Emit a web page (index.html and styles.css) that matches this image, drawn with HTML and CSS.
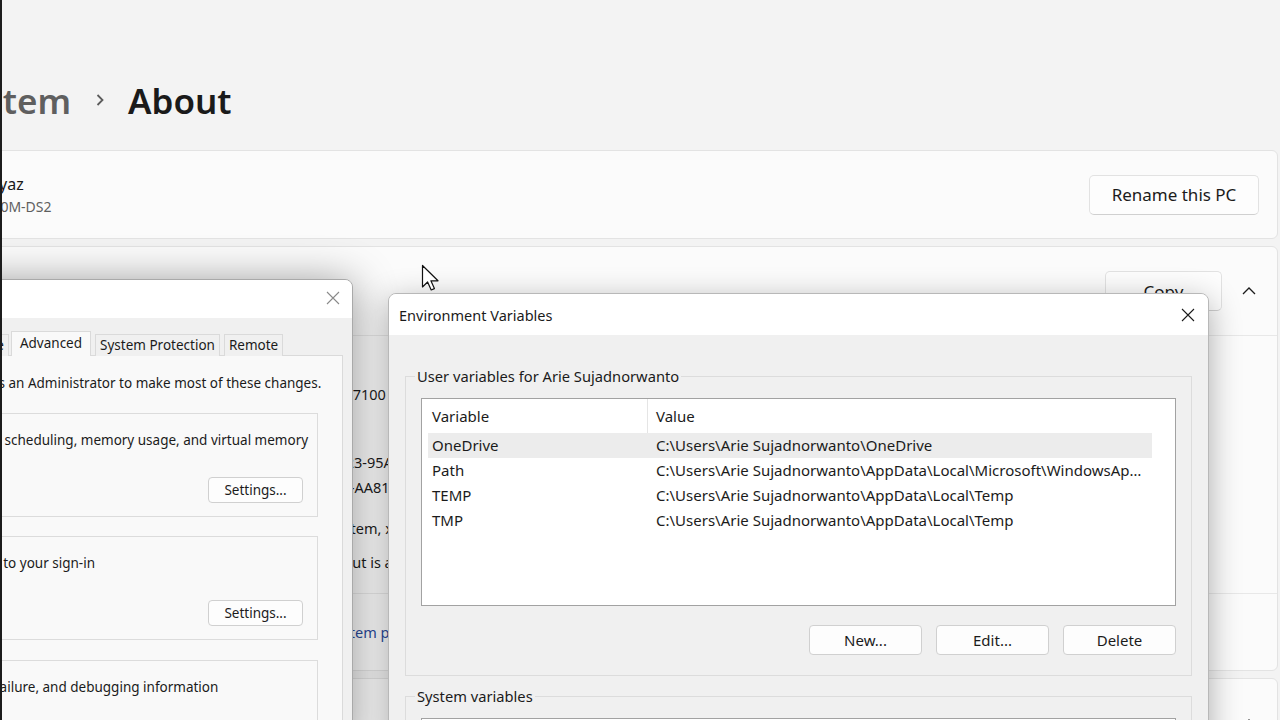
FILE: index.html
```html
<!DOCTYPE html>
<html lang="en">
<head>
<meta charset="utf-8">
<title>About - Environment Variables</title>
<link rel="stylesheet" href="styles.css">
</head>
<body>
<div class="screen">
  <main class="settings">
    <header class="crumbs">
      <span class="crumb-parent">System</span>
      <span class="crumb-sep"><svg width="10" height="14" viewBox="0 0 10 14"><path d="M2.5 2 L7.5 7 L2.5 12" fill="none" stroke="#5c5c5c" stroke-width="1.8"/></svg></span>
      <h1 class="crumb-current">About</h1>
    </header>

    <div class="cards">
      <section class="card pc-card">
        <div class="pc-info">
          <div class="pc-name">Riyaz</div>
          <div class="pc-model">H110M-DS2</div>
        </div>
        <button class="btn-fluent rename">Rename this PC</button>
      </section>

      <section class="card expander">
        <div class="exp-head">
          <span class="exp-title">Device specifications</span>
          <button class="btn-fluent copy">Copy</button>
          <svg class="chev-up" width="16" height="10" viewBox="0 0 16 10"><path d="M2 8 L8 2 L14 8" fill="none" stroke="#1b1b1b" stroke-width="1.3"/></svg>
        </div>
        <div class="specs">
          <div class="spec-row"><span class="spec-label">Device name</span><span class="spec-value">Riyaz</span></div>
          <div class="spec-row shift"><span class="spec-label">Processor</span><span class="spec-value">Intel(R) Core(TM) i3-7100 CPU @ 3.90GHz   3.91 GHz</span></div>
          <div class="spec-row"><span class="spec-label">Installed RAM</span><span class="spec-value">8.00 GB</span></div>
          <div class="spec-row"><span class="spec-label">Device ID</span><span class="spec-value">5D2B9C41-7E0A-4F23-95A2-6C8D1E7F0B44</span></div>
          <div class="spec-row join"><span class="spec-label">Product ID</span><span class="spec-value">00330-80000-00000-AA812</span></div>
          <div class="spec-row wide"><span class="spec-label">System type</span><span class="spec-value">64-bit operating system, x64-based processor</span></div>
          <div class="spec-row"><span class="spec-label">Pen and touch</span><span class="spec-value">No pen or touch input is available for this display</span></div>
        </div>
        <div class="links">
          <span class="links-label">Related links</span>
          <a class="link">Domain or workgroup</a>
          <a class="link">System protection</a>
          <a class="link">Advanced system settings</a>
        </div>
      </section>

      <section class="card expander">
        <div class="exp-head">
          <span class="exp-title">Windows specifications</span>
          <svg class="chev-up" width="16" height="10" viewBox="0 0 16 10"><path d="M2 8 L8 2 L14 8" fill="none" stroke="#1b1b1b" stroke-width="1.3"/></svg>
        </div>
      </section>
    </div>
  </main>

  <div class="window sysprops">
    <div class="titlebar inactive">
      <span class="win-title">System Properties</span>
      <svg class="close" width="14" height="14" viewBox="0 0 14 14"><path d="M1 1 L13 13 M13 1 L1 13" stroke="#8a8a8a" stroke-width="1.1"/></svg>
    </div>
    <div class="sp-body">
      <div class="tabs">
        <span class="tab">Computer Name</span>
        <span class="tab">Hardware</span>
        <span class="tab active">Advanced</span>
        <span class="tab">System Protection</span>
        <span class="tab">Remote</span>
      </div>
      <div class="tab-panel">
        <p class="sp-note">You must be logged on as an Administrator to make most of these changes.</p>
        <fieldset class="sp-group g1">
          <legend>Performance</legend>
          <p class="sp-text">Visual effects, processor scheduling, memory usage, and virtual memory</p>
          <div class="sp-actions"><button class="btn-classic">Settings...</button></div>
        </fieldset>
        <fieldset class="sp-group g2">
          <legend>User Profiles</legend>
          <p class="sp-text">Desktop settings related to your sign-in</p>
          <div class="sp-actions"><button class="btn-classic">Settings...</button></div>
        </fieldset>
        <fieldset class="sp-group g3">
          <legend>Startup and Recovery</legend>
          <p class="sp-text">System startup, system failure, and debugging information</p>
          <div class="sp-actions"><button class="btn-classic">Settings...</button></div>
        </fieldset>
      </div>
    </div>
  </div>

  <div class="window envvars">
    <div class="titlebar">
      <span class="win-title">Environment Variables</span>
      <svg class="close" width="14" height="14" viewBox="0 0 14 14"><path d="M1 1 L13 13 M13 1 L1 13" stroke="#1b1b1b" stroke-width="1.1"/></svg>
    </div>
    <div class="ev-body">
      <fieldset class="ev-group">
        <legend>User variables for Arie Sujadnorwanto</legend>
        <div class="listview">
          <div class="lv-head">
            <span class="lv-col var">Variable</span>
            <span class="lv-col val">Value</span>
          </div>
          <div class="lv-row selected"><span class="lv-cell var">OneDrive</span><span class="lv-cell val">C:\Users\Arie Sujadnorwanto\OneDrive</span></div>
          <div class="lv-row"><span class="lv-cell var">Path</span><span class="lv-cell val">C:\Users\Arie Sujadnorwanto\AppData\Local\Microsoft\WindowsApps;</span></div>
          <div class="lv-row"><span class="lv-cell var">TEMP</span><span class="lv-cell val">C:\Users\Arie Sujadnorwanto\AppData\Local\Temp</span></div>
          <div class="lv-row"><span class="lv-cell var">TMP</span><span class="lv-cell val">C:\Users\Arie Sujadnorwanto\AppData\Local\Temp</span></div>
        </div>
        <div class="ev-actions">
          <button class="btn-classic ev-btn">New...</button>
          <button class="btn-classic ev-btn">Edit...</button>
          <button class="btn-classic ev-btn">Delete</button>
        </div>
      </fieldset>
      <fieldset class="ev-group second">
        <legend>System variables</legend>
        <div class="listview tall"></div>
      </fieldset>
    </div>
  </div>

  <svg class="cursor" width="20" height="28" viewBox="0 0 20 28"><path d="M1.5 1.5 L1.5 23 L6.6 18 L10.2 26 L13.4 24.6 L9.9 16.8 L17 16.8 Z" fill="#ffffff" stroke="#111111" stroke-width="1.2" stroke-linejoin="round"/></svg>
</div>
</body>
</html>
```

FILE: styles.css
```css
* { box-sizing: border-box; }
html, body { margin: 0; padding: 0; }
body {
  width: 1280px;
  height: 720px;
  overflow: hidden;
  background: #f3f3f3;
  font-family: "Segoe UI", "Noto Sans", "Open Sans", sans-serif;
  color: #1b1b1b;
}
button { font-family: inherit; color: inherit; }
p { margin: 0; }

.screen {
  position: relative;
  width: 1280px;
  height: 720px;
  overflow: hidden;
}
.screen::after {
  content: "";
  position: absolute;
  left: 0;
  top: 0;
  width: 2px;
  height: 100%;
  background: #1c1c1c;
}

/* ---------- settings page ---------- */
.settings { display: flex; flex-direction: column; }

.crumbs {
  height: 150px;
  padding-top: 50px;
  display: flex;
  align-items: center;
  white-space: nowrap;
}
.crumb-parent {
  width: 150px;
  margin-left: -79px;
  text-align: right;
  font-size: 35px;
  font-weight: 600;
  color: #5f5f5f;
  direction: rtl;
}
.crumb-sep {
  width: 57px;
  display: flex;
  justify-content: center;
}
.crumb-current {
  margin: 0;
  font-size: 35px;
  font-weight: 600;
  color: #1a1a1a;
}

.cards {
  margin-left: -40px;
  width: 1318px;
  display: flex;
  flex-direction: column;
  gap: 7px;
}
.card {
  background: #fbfbfb;
  border: 1px solid #e3e3e3;
  border-radius: 6px;
}
.pc-card {
  height: 89px;
  display: flex;
  align-items: center;
  justify-content: space-between;
  padding-right: 18px;
}
.pc-info { display: flex; flex-direction: column; gap: 2px; }
.pc-name { margin-left: 24px; font-size: 16px; line-height: 22px; color: #1a1a1a; }
.pc-model { margin-left: 13px; font-size: 14px; line-height: 20px; color: #5f5f5f; }

.btn-fluent {
  background: #fdfdfd;
  border: 1px solid #e2e2e2;
  border-bottom-color: #d0d0d0;
  border-radius: 5px;
  font-size: 17px;
  color: #1b1b1b;
}
.rename { width: 170px; height: 40px; }

.exp-head {
  height: 88px;
  display: flex;
  align-items: center;
  padding: 0 20px 0 60px;
}
.exp-title { flex: 1; font-size: 15px; }
.copy { width: 117px; height: 40px; margin-right: 19px; }

.specs {
  border-top: 1px solid #e8e8e8;
  padding: 12px 0 18px 60px;
  font-size: 14.5px;
}
.spec-row {
  display: grid;
  grid-template-columns: 195px 1fr;
  line-height: 25px;
  margin-top: 9px;
  white-space: pre;
}
.spec-row:first-child { margin-top: 0; }
.spec-row.join { margin-top: 0; }
.spec-row.wide { margin-top: 16px; }
.spec-row.shift { grid-template-columns: 197px 1fr; }
.spec-label { color: #1b1b1b; }
.spec-value { color: #1b1b1b; }

.links {
  border-top: 1px solid #e8e8e8;
  height: 77px;
  display: flex;
  align-items: center;
  gap: 44px;
  padding-left: 41px;
  font-size: 14.5px;
  white-space: nowrap;
}
.link { color: #2a4b9b; }

.chev-up { flex: none; }

/* ---------- windows ---------- */
.window {
  position: absolute;
  display: flex;
  flex-direction: column;
  background: #f0f0f0;
  border: 1px solid #a9a9a9;
  border-radius: 0 8px 0 0;
  overflow: hidden;
  box-shadow: 0 4px 44px rgba(0, 0, 0, 0.42);
}
.titlebar {
  flex: none;
  display: flex;
  align-items: center;
  justify-content: space-between;
  background: #ffffff;
}
.win-title { font-size: 14px; color: #1b1b1b; white-space: nowrap; }

/* System properties */
.sysprops {
  left: -181px;
  top: 279px;
  width: 534px;
  height: 470px;
}
.sysprops .titlebar { height: 38px; padding: 0 12px 2px 12px; }
.sysprops .win-title { color: #777; }
.sp-body {
  flex: 1;
  padding: 13px 9px 0 10px;
  font-size: 13.5px;
}
.tabs {
  height: 25px;
  display: flex;
  align-items: flex-end;
  margin-left: -13px;
  white-space: nowrap;
}
.tab {
  height: 22px;
  line-height: 20px;
  padding: 0 4px;
  border: 1px solid #dadada;
  border-bottom: none;
  background: #f0f0f0;
  margin-right: 4px;
  color: #1b1b1b;
}
.tab.active {
  height: 25px;
  line-height: 23px;
  padding: 0 8px;
  margin: 0 4px 0 -2px;
  background: #f9f9f9;
  position: relative;
  z-index: 1;
}
.tab-panel {
  background: #f9f9f9;
  border: 1px solid #dadada;
  height: 380px;
  padding: 18px 24px 0 10px;
  margin-top: -1px;
}
.sp-note { line-height: 18px; white-space: nowrap; }
.sp-group {
  min-width: 0;
  margin: 12px 0 0 -7px;
  border: 1px solid #dcdcdc;
  padding: 9px 14px 13px 13px;
}
.sp-group.g2 { margin-top: 10px; padding-left: 10px; }
.sp-group.g3 { margin-top: 11px; padding-left: 9px; }
.sp-group legend { padding: 0 2px; line-height: 18px; }
.sp-text { line-height: 18px; white-space: nowrap; }
.sp-actions { display: flex; justify-content: flex-end; margin-top: 28px; }

.btn-classic {
  background: #fdfdfd;
  border: 1px solid #d0d0d0;
  border-radius: 4px;
  font-size: 13.5px;
  width: 95px;
  height: 26px;
  padding: 0;
}

/* Environment variables */
.envvars {
  left: 388px;
  top: 293px;
  width: 821px;
  height: 460px;
  border-color: #b8b8b8;
  border-radius: 8px 8px 0 0;
  box-shadow: 0 8px 32px rgba(0, 0, 0, 0.32);
}
.envvars .titlebar { height: 41px; padding: 0 13px 0 10px; }
.envvars .win-title { font-size: 14.5px; }
.ev-body {
  flex: 1;
  padding: 32px 16px 0 16px;
  font-size: 15px;
}
.ev-group {
  margin: 0;
  min-width: 0;
  border: 1px solid #dcdcdc;
  padding: 13px 15px 20px 15px;
}
.ev-group legend {
  font-size: 14.7px;
  line-height: 18px;
  padding: 0 2px;
  margin-left: -6px;
}
.ev-group.second { margin-top: 11px; height: 120px; }

.listview {
  height: 208px;
  background: #ffffff;
  border: 1px solid #a2a2a2;
}
.lv-head {
  width: 730px;
  height: 34px;
  display: flex;
  align-items: center;
}
.lv-col { line-height: 34px; color: #1b1b1b; }
.lv-col.var { width: 226px; padding-left: 10px; border-right: 1px solid #e5e5e5; }
.lv-col.val { padding-left: 8px; }
.lv-row {
  margin-left: 6px;
  width: 724px;
  height: 25px;
  display: flex;
  align-items: center;
}
.lv-row.selected { background: #ececec; }
.lv-cell { line-height: 25px; white-space: nowrap; color: #1b1b1b; }
.lv-cell.var { width: 220px; padding-left: 4px; }
.lv-cell.val {
  width: 504px;
  padding: 0 8px;
  overflow: hidden;
  text-overflow: ellipsis;
}

.ev-actions {
  display: flex;
  justify-content: flex-end;
  gap: 14px;
  margin-top: 19px;
}
.ev-btn { width: 113px; height: 30px; font-size: 15px; }

.cursor {
  position: absolute;
  left: 421px;
  top: 264px;
}
```
